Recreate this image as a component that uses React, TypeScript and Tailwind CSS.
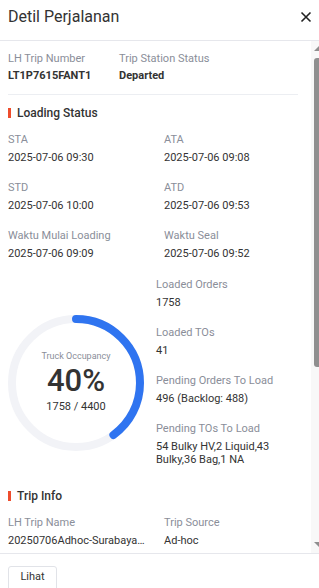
import React from "react";

const Label = ({ children }: { children: React.ReactNode }) => (
  <div className="text-[11px] leading-[16px] text-[#8a8e99]">{children}</div>
);
const Value = ({ children }: { children: React.ReactNode }) => (
  <div className="mt-[2px] text-[11px] leading-[16px] text-[#333333]">{children}</div>
);

const Field = ({ label, value, className = "" }: { label: string; value: React.ReactNode; className?: string }) => (
  <div className={`h-[48px] ${className}`}>
    <Label>{label}</Label>
    <Value>{value}</Value>
  </div>
);

const SectionTitle = ({ children }: { children: React.ReactNode }) => (
  <div className="flex items-center gap-[6px] h-[18px]">
    <span className="w-[3px] h-[10px] bg-[#ee4d2d]" />
    <span className="text-[12px] font-medium text-[#333333]">{children}</span>
  </div>
);

const Donut = () => {
  const r = 64;
  const c = 2 * Math.PI * r;
  return (
    <div className="relative w-[136px] h-[136px]">
      <svg width="136" height="136" viewBox="0 0 136 136">
        <circle cx="68" cy="68" r={r} fill="none" stroke="#f2f3f7" strokeWidth="8" />
        <circle
          cx="68"
          cy="68"
          r={r}
          fill="none"
          stroke="#2f74f0"
          strokeWidth="8"
          strokeLinecap="round"
          strokeDasharray={`${c * 0.4} ${c}`}
          transform="rotate(-90 68 68)"
        />
      </svg>
      <div className="absolute inset-0 flex flex-col items-center justify-center">
        <div className="text-[9px] leading-[12px] text-[#8a8e99] -mt-[2px]">Truck Occupancy</div>
        <div className="text-[31px] leading-[36px] font-medium text-[#333333] mt-[1px]">40%</div>
        <div className="text-[11px] leading-[14px] text-[#333333] mt-[1px]">1758 / 4400</div>
      </div>
    </div>
  );
};

export default function App() {
  return (
    <div
      className="w-[319px] h-[588px] bg-white overflow-hidden flex flex-col relative"
      style={{ fontFamily: "Roboto, 'Noto Sans', sans-serif" }}
    >
      {/* Header */}
      <div className="h-[41px] shrink-0 flex items-center justify-between pl-[8px] pr-[6px] border-b border-[#e6e7ec]">
        <div className="text-[16px] text-[#333333] -mt-[6px]">Detil Perjalanan</div>
        <svg width="12" height="12" viewBox="0 0 12 12" className="-mt-[6px] mr-[1px]">
          <path d="M1.5 1.5 L10.5 10.5 M10.5 1.5 L1.5 10.5" stroke="#222" strokeWidth="1.6" />
        </svg>
      </div>

      {/* Body */}
      <div className="flex-1 overflow-hidden pl-[8px] pr-[21px] relative">
        <div className="pt-[10px] flex">
          <div className="w-[111px]">
            <Label>LH Trip Number</Label>
            <div className="mt-[1px] text-[11px] leading-[16px] font-bold text-[#333333]">LT1P7615FANT1</div>
          </div>
          <div>
            <Label>Trip Station Status</Label>
            <div className="mt-[1px] text-[11px] leading-[16px] font-bold text-[#333333]">Departed</div>
          </div>
        </div>
        <div className="mt-[10px] h-px bg-[#eceef2]" />

        <div className="mt-[9px]">
          <SectionTitle>Loading Status</SectionTitle>
        </div>
        <div className="mt-[10px] grid grid-cols-[156px_1fr]">
          <Field label="STA" value="2025-07-06 09:30" />
          <Field label="ATA" value="2025-07-06 09:08" />
          <Field label="STD" value="2025-07-06 10:00" />
          <Field label="ATD" value="2025-07-06 09:53" />
          <Field label="Waktu Mulai Loading" value="2025-07-06 09:09" />
          <Field label="Waktu Seal" value="2025-07-06 09:52" />
        </div>

        <div className="flex mt-[1px]">
          <div className="w-[148px] shrink-0 pt-[38px]">
            <Donut />
          </div>
          <div className="flex-1">
            <Field label="Loaded Orders" value="1758" />
            <Field label="Loaded TOs" value="41" />
            <Field label="Pending Orders To Load" value="496 (Backlog: 488)" />
            <div>
              <Label>Pending TOs To Load</Label>
              <div className="mt-[3px] text-[11px] leading-[13px] text-[#333333]">
                54 Bulky HV,2 Liquid,43 Bulky,36 Bag,1 NA
              </div>
            </div>
          </div>
        </div>

        <div className="mt-[21px]">
          <SectionTitle>Trip Info</SectionTitle>
        </div>
        <div className="mt-[10px] grid grid-cols-[156px_1fr]">
          <Field label="LH Trip Name" value={<span className="block truncate w-[137px]">20250706Adhoc-Surabaya-Jakarta</span>} />
          <Field label="Trip Source" value="Ad-hoc" />
        </div>

        {/* scrollbar */}
        <div className="absolute top-0 right-0 bottom-0 w-[8px] bg-[#f8f8f8]">
          <svg width="5" height="5" viewBox="0 0 5 5" className="absolute top-[5px] right-0">
            <path d="M5 0 L5 5 L0 5 Z" fill="#8f8f8f" />
          </svg>
          <div className="absolute top-[17px] right-0 w-[5px] h-[309px] bg-[#8f8f8f] rounded-l-[3px]" />
          <svg width="5" height="5" viewBox="0 0 5 5" className="absolute bottom-[6px] right-0">
            <path d="M0 0 L5 0 L5 5 Z" fill="#8f8f8f" />
          </svg>
        </div>
      </div>

      {/* Footer */}
      <div className="h-[35px] shrink-0 border-t border-[#e6e7ec] pl-[8px] pt-[12px]">
        <button className="w-[49px] h-[30px] border border-[#e1e3e8] rounded-[3px] bg-white text-[11px] leading-[13px] text-[#333333] flex items-start justify-center pt-[3px]">
          Lihat
        </button>
      </div>
    </div>
  );
}
